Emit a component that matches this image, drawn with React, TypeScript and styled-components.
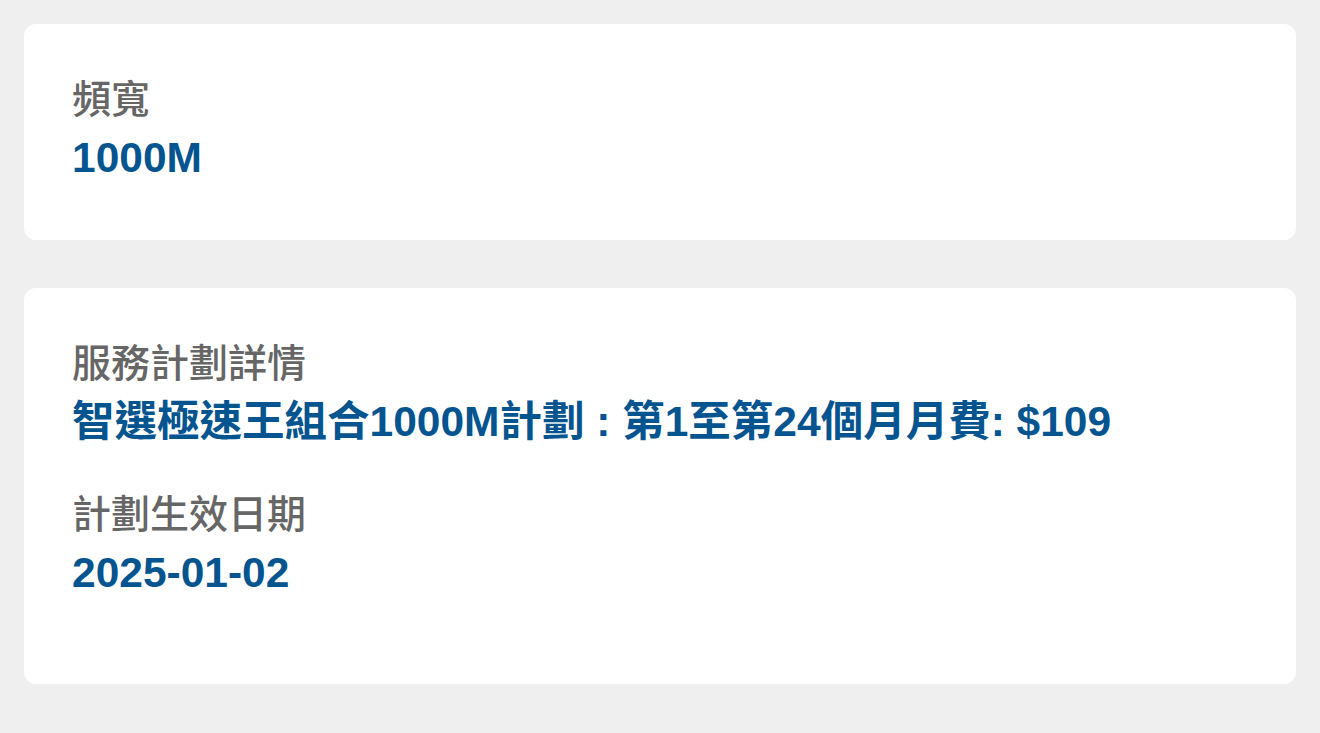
import React from "react";
import styled, { createGlobalStyle } from "styled-components";

const GlobalStyle = createGlobalStyle`
  html, body {
    margin: 0;
    padding: 0;
    background: #efefef;
  }
  body {
    font-family: "Liberation Sans", "Noto Sans CJK TC", sans-serif;
  }
`;

const Page = styled.div`
  display: flex;
  flex-direction: column;
  gap: 48px;
  padding: 24px;
  min-height: 733px;
  box-sizing: border-box;
  background: #efefef;
`;

const Card = styled.section<{ $padBottom: number }>`
  display: flex;
  flex-direction: column;
  gap: 35px;
  background: #ffffff;
  border-radius: 12px;
  padding: 48px 48px ${(p) => p.$padBottom}px;
`;

const Field = styled.div`
  display: flex;
  flex-direction: column;
`;

const Label = styled.div`
  font-family: "Liberation Sans", "Noto Sans CJK TC", sans-serif;
  font-size: 39px;
  line-height: 56px;
  font-weight: 500;
  color: #666666;
  white-space: nowrap;
`;

const Value = styled.div`
  font-family: "Liberation Sans", "Noto Sans CJK TC", sans-serif;
  font-size: 42.5px;
  line-height: 60px;
  font-weight: 700;
  color: #04548f;
  white-space: nowrap;
`;

type Item = { label: string; value: string };

const cards: { items: Item[]; padBottom: number }[] = [
  { items: [{ label: "頻寬", value: "1000M" }], padBottom: 52 },
  {
    items: [
      {
        label: "服務計劃詳情",
        value: "智選極速王組合1000M計劃 : 第1至第24個月月費: $109",
      },
      { label: "計劃生效日期", value: "2025-01-02" },
    ],
    padBottom: 81,
  },
];

export default function App() {
  return (
    <>
      <GlobalStyle />
      <Page>
        {cards.map((card, i) => (
          <Card key={i} $padBottom={card.padBottom}>
            {card.items.map((item) => (
              <Field key={item.label}>
                <Label>{item.label}</Label>
                <Value>{item.value}</Value>
              </Field>
            ))}
          </Card>
        ))}
      </Page>
    </>
  );
}
